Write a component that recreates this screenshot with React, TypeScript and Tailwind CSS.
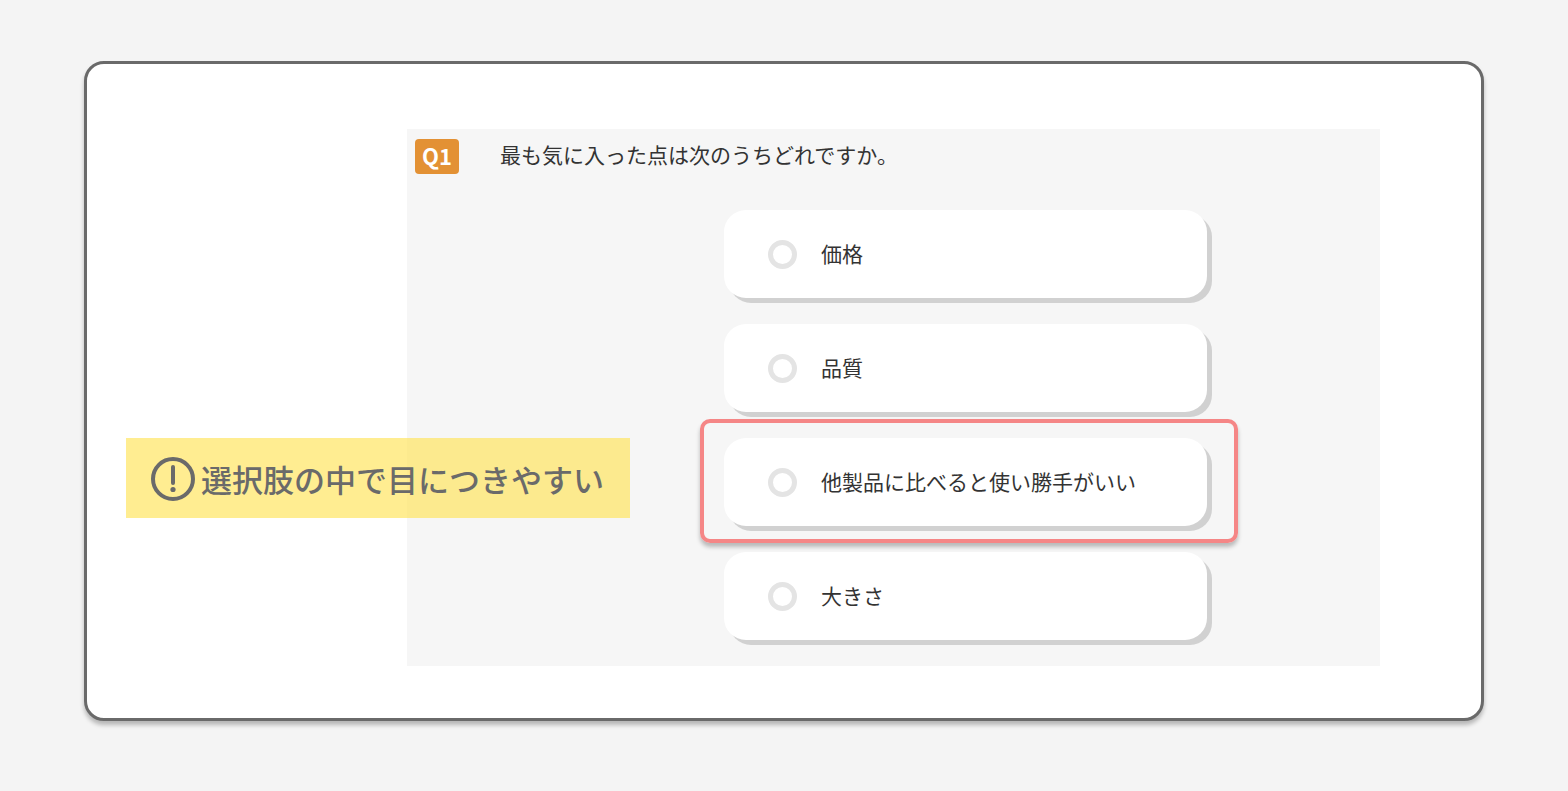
import type React from "react";

interface Choice {
  id: string;
  label: string;
  highlighted?: boolean;
}

const choices: Choice[] = [
  { id: "price", label: "価格" },
  { id: "quality", label: "品質" },
  { id: "usability", label: "他製品に比べると使い勝手がいい", highlighted: true },
  { id: "size", label: "大きさ" },
];

const ChoiceCard: React.FC<{ choice: Choice }> = ({ choice }) => {
  return (
    <div className="relative">
      <label
        htmlFor={choice.id}
        className="flex h-22 cursor-pointer items-center gap-6 rounded-[22px] bg-white pl-11 shadow-[5px_5px_0_#d1d1d1]"
      >
        <input
          type="radio"
          id={choice.id}
          name="q1"
          value={choice.id}
          className="size-[29px] shrink-0 appearance-none rounded-full border-5 border-[#e4e4e4] bg-white checked:border-[#e39134]"
        />
        <span className="pb-0.5 text-[21px] leading-8">{choice.label}</span>
      </label>
      {/* Frame drawn around the highlighted choice */}
      {choice.highlighted && (
        <div className="pointer-events-none absolute -top-[19px] -right-[31px] -bottom-[17px] -left-6 rounded-[10px] border-4 border-[#f58686] shadow-[0_4px_4px_rgba(0,0,0,0.25)]" />
      )}
    </div>
  );
};

const Callout: React.FC = () => {
  return (
    <aside className="absolute top-[374px] left-[39px] flex h-20 w-[504px] items-center gap-[5px] bg-[#ffe562]/70 pt-0.5 pl-6 text-[#6a6a6a]">
      <svg viewBox="0 0 46 46" className="size-[46px] shrink-0" fill="none" aria-hidden="true">
        <circle cx="23" cy="23" r="20" stroke="currentColor" strokeWidth="4" />
        <path d="M23 11v16" stroke="currentColor" strokeWidth="4" strokeLinecap="round" />
        <circle cx="23" cy="33.5" r="2.6" fill="currentColor" />
      </svg>
      <p className="text-[31px] leading-10 font-medium whitespace-nowrap">選択肢の中で目につきやすい</p>
    </aside>
  );
};

export default function App() {
  return (
    <main className="min-h-screen bg-[#f4f4f4] px-21 pt-[61px] pb-[70px] font-['Noto_Sans_CJK_JP','Liberation_Sans',sans-serif] text-[#333333]">
      <div className="relative rounded-[20px] border-3 border-[#6a6a6a] bg-white pt-[65px] pr-[101px] pb-[52px] pl-80 shadow-[0_4px_4px_rgba(0,0,0,0.25)]">
        <fieldset className="bg-[#f6f6f6] pb-[26px]">
          <legend className="contents">
            <div className="flex items-start gap-[41px] pt-[10px] pl-2">
              <span className="flex h-[35px] w-11 items-center justify-center rounded-sm bg-[#e39134] pb-[3px] text-[22px] leading-8 font-bold text-white">
                Q1
              </span>
              <span className="text-[21px] leading-[30px]">最も気に入った点は次のうちどれですか。</span>
            </div>
          </legend>
          <div className="mt-9 mr-[173px] ml-[317px] flex flex-col gap-[26px]">
            {choices.map((choice) => (
              <ChoiceCard key={choice.id} choice={choice} />
            ))}
          </div>
        </fieldset>
        <Callout />
      </div>
    </main>
  );
}
